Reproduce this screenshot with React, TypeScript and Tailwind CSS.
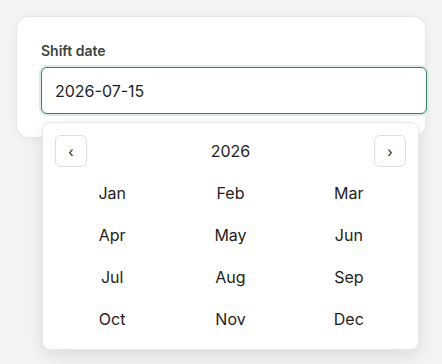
import React, { useState } from 'react';

const MONTHS = ['Jan', 'Feb', 'Mar', 'Apr', 'May', 'Jun', 'Jul', 'Aug', 'Sep', 'Oct', 'Nov', 'Dec'];

export default function App() {
    const [year, setYear] = useState(2026);
    const [value, setValue] = useState('2026-07-15');

    return (
        <div
            className="relative min-h-[364px] w-[442px] overflow-hidden bg-[#f3f4f3] pt-[17px] pl-[17px]"
            style={{ fontFamily: 'Inter, "Noto Sans", sans-serif' }}
        >
            <div className="w-[408px] rounded-xl bg-white pt-[24px] pb-[23px] pl-[24px] shadow-[0_2px_12px_rgba(0,0,0,0.06)] ring-1 ring-[#e6e9e7]">
                <label className="block text-[14px] font-semibold leading-[20px] text-[#3b4540]">Shift date</label>
                <input
                    value={value}
                    onChange={(e) => setValue(e.target.value)}
                    className="mt-[6px] block h-[47px] w-[386px] rounded-md border border-[#3d7d69] bg-white px-[13px] text-[16px] text-[#1c1f1e] outline-none ring-2 ring-[#dcede6]"
                />
            </div>

            <div className="absolute top-[122px] left-[42px] w-[377px] rounded-lg border border-[#e5e7e6] bg-white px-3 pt-3 pb-[10px] shadow-[0_6px_18px_rgba(0,0,0,0.10)]">
                <div className="flex h-8 items-center justify-between">
                    <button
                        onClick={() => setYear(year - 1)}
                        className="flex h-8 w-8 items-center justify-center rounded-md border border-[#dcdfdd] text-[14px] text-[#222]"
                    >
                        ‹
                    </button>
                    <span className="text-[16px] text-[#1f2221]">{year}</span>
                    <button
                        onClick={() => setYear(year + 1)}
                        className="flex h-8 w-8 items-center justify-center rounded-md border border-[#dcdfdd] text-[14px] text-[#222]"
                    >
                        ›
                    </button>
                </div>
                <div className="-mx-[2px] mt-[6px] grid grid-cols-3 gap-y-[2px]">
                    {MONTHS.map((m) => (
                        <button key={m} className="flex h-10 items-center justify-center text-[16px] text-[#1f2221]">
                            {m}
                        </button>
                    ))}
                </div>
            </div>
        </div>
    );
}
